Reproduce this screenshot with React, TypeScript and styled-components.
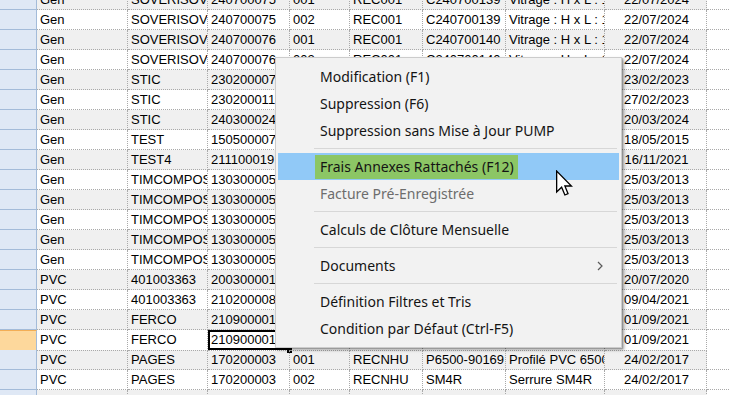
import styled, { createGlobalStyle } from 'styled-components';

const GlobalStyle = createGlobalStyle`
  html, body {
    margin: 0;
    padding: 0;
    background: #ffffff;
    overflow: hidden;
  }
`;

type Line = {
  kind: string;
  supplier: string;
  number: string;
  line: string;
  rec: string;
  code: string;
  label: string;
  date: string;
};

const mk = (
  kind: string,
  supplier: string,
  number: string,
  line: string,
  rec: string,
  code: string,
  label: string,
  date: string
): Line => ({ kind, supplier, number, line, rec, code, label, date });

const VIT = 'Vitrage : H x L : 1200 x 800';

const Lines: Line[] = [
  mk('Gen', 'SOVERISOV', '240700075', '001', 'REC001', 'C240700139', VIT, '22/07/2024'),
  mk('Gen', 'SOVERISOV', '240700075', '002', 'REC001', 'C240700139', VIT, '22/07/2024'),
  mk('Gen', 'SOVERISOV', '240700076', '001', 'REC001', 'C240700140', VIT, '22/07/2024'),
  mk('Gen', 'SOVERISOV', '240700076', '002', 'REC001', 'C240700140', VIT, '22/07/2024'),
  mk('Gen', 'STIC', '230200007', '001', 'REC001', 'STIC-0007', 'Joint STIC', '23/02/2023'),
  mk('Gen', 'STIC', '230200011', '001', 'REC001', 'STIC-0011', 'Joint STIC', '27/02/2023'),
  mk('Gen', 'STIC', '240300024', '001', 'REC001', 'STIC-0024', 'Joint STIC', '20/03/2024'),
  mk('Gen', 'TEST', '150500007', '001', 'REC001', 'TEST-01', 'Article test', '18/05/2015'),
  mk('Gen', 'TEST4', '211100019', '001', 'REC001', 'TEST-04', 'Article test', '16/11/2021'),
  mk('Gen', 'TIMCOMPOS', '130300005', '001', 'REC001', 'TIM-001', 'Composite', '25/03/2013'),
  mk('Gen', 'TIMCOMPOS', '130300005', '002', 'REC001', 'TIM-002', 'Composite', '25/03/2013'),
  mk('Gen', 'TIMCOMPOS', '130300005', '003', 'REC001', 'TIM-003', 'Composite', '25/03/2013'),
  mk('Gen', 'TIMCOMPOS', '130300005', '004', 'REC001', 'TIM-004', 'Composite', '25/03/2013'),
  mk('Gen', 'TIMCOMPOS', '130300005', '005', 'REC001', 'TIM-005', 'Composite', '25/03/2013'),
  mk('PVC', '401003363', '200300001', '001', 'RECNHU', 'P401-001', 'Profilé PVC', '20/07/2020'),
  mk('PVC', '401003363', '210200008', '001', 'RECNHU', 'P401-008', 'Profilé PVC', '09/04/2021'),
  mk('PVC', 'FERCO', '210900001', '001', 'RECNHU', 'FERCO-01', 'Ferrure', '01/09/2021'),
  mk('PVC', 'FERCO', '210900001', '002', 'RECNHU', 'FERCO-02', 'Ferrure', '01/09/2021'),
  mk('PVC', 'PAGES', '170200003', '001', 'RECNHU', 'P6500-90169', 'Profilé PVC 6500 Blanc', '24/02/2017'),
  mk('PVC', 'PAGES', '170200003', '002', 'RECNHU', 'SM4R', 'Serrure SM4R', '24/02/2017'),
  mk('PVC', 'PAGES', '170200003', '003', 'RECNHU', 'P6500-90170', 'Profilé PVC 6500 Blanc', '24/02/2017'),
];

const CURRENT_ROW = 17;

type Entry =
  | { type: 'item'; label: string; active?: boolean; disabled?: boolean; sub?: boolean }
  | { type: 'sep' };

const MenuEntries: Entry[] = [
  { type: 'item', label: 'Modification (F1)' },
  { type: 'item', label: 'Suppression (F6)' },
  { type: 'item', label: 'Suppression sans Mise à Jour PUMP' },
  { type: 'sep' },
  { type: 'item', label: 'Frais Annexes Rattachés (F12)', active: true },
  { type: 'item', label: 'Facture Pré-Enregistrée', disabled: true },
  { type: 'sep' },
  { type: 'item', label: 'Calculs de Clôture Mensuelle' },
  { type: 'sep' },
  { type: 'item', label: 'Documents', sub: true },
  { type: 'sep' },
  { type: 'item', label: 'Définition Filtres et Tris' },
  { type: 'item', label: 'Condition par Défaut (Ctrl-F5)' },
];

const App = () => {
  return (
    <>
      <GlobalStyle />
      <Screen>
        <Sheet>
          {Lines.map((l, i) => {
            const current = i === CURRENT_ROW;
            return (
              <Row key={i} $alt={i % 2 === 0}>
                <RowHeader $current={current} />
                <Cell>{l.kind}</Cell>
                <Cell>{l.supplier}</Cell>
                <Cell $focused={current}>{l.number}</Cell>
                <Cell>{l.line}</Cell>
                <Cell>{l.rec}</Cell>
                <Cell>{l.code}</Cell>
                <Cell>{l.label}</Cell>
                <Cell $center>{l.date}</Cell>
                <Filler />
              </Row>
            );
          })}
        </Sheet>

        <ContextMenu>
          {MenuEntries.map((e, i) =>
            e.type === 'sep' ? (
              <Separator key={i} />
            ) : (
              <MenuItem key={i} $active={!!e.active} $disabled={!!e.disabled}>
                <ItemLabel $marked={!!e.active}>{e.label}</ItemLabel>
                {e.sub && (
                  <SubArrow viewBox="0 0 6 10" width="6" height="10">
                    <path d="M1 1 L5 5 L1 9" fill="none" stroke="#5a5a5a" strokeWidth="1.2" />
                  </SubArrow>
                )}
              </MenuItem>
            )
          )}
        </ContextMenu>

        <Pointer viewBox="0 0 13 20" width="17" height="27">
          <path
            d="M0.5 0.5 L0.5 16.5 L4.3 12.8 L6.8 18.8 L9.2 17.8 L6.8 11.9 L11.8 11.9 Z"
            fill="#ffffff"
            stroke="#000000"
            strokeWidth="1"
            strokeLinejoin="miter"
          />
        </Pointer>
      </Screen>
    </>
  );
};

export default App;

const Screen = styled.div`
  position: relative;
  width: 729px;
  height: 395px;
  overflow: hidden;
  background: #ffffff;
`;

const Sheet = styled.div`
  display: flex;
  flex-direction: column;
  margin-top: -10px;
  font-family: 'Liberation Sans', Arial, sans-serif;
  font-size: 13px;
  color: #000000;
`;

const Row = styled.div<{ $alt: boolean }>`
  display: grid;
  grid-template-columns: 37px 91px 80px 82px 60px 73px 83px 99px 102px 1fr;
  height: 20px;
  background: ${({ $alt }) => ($alt ? '#f0f0f0' : '#ffffff')};
`;

const RowHeader = styled.div<{ $current: boolean }>`
  box-sizing: border-box;
  background: ${({ $current }) => ($current ? '#fdd89c' : '#dfe8f5')};
  border-right: 1px solid #a3bbd9;
  border-bottom: 1px solid #a3bbd9;
  border-top: ${({ $current }) => ($current ? '1px solid #f3ae55' : '0')};
`;

const Cell = styled.div<{ $center?: boolean; $focused?: boolean }>`
  position: relative;
  box-sizing: border-box;
  padding: 0 1px 0 3px;
  line-height: 20px;
  white-space: nowrap;
  overflow: ${({ $focused }) => ($focused ? 'visible' : 'hidden')};
  text-align: ${({ $center }) => ($center ? 'center' : 'left')};
  border-right: 1px dotted #a9a9a9;
  border-bottom: 1px dotted #a9a9a9;
  ${({ $focused }) =>
    $focused &&
    `
    background: #ffffff;
    box-shadow: inset 0 0 0 2px #000000;
    &::after {
      content: '';
      position: absolute;
      right: -3px;
      bottom: -3px;
      width: 5px;
      height: 5px;
      background: #000000;
    }
  `}
`;

const Filler = styled.div`
  box-sizing: border-box;
  background: #ffffff;
  border-bottom: 1px dotted #a9a9a9;
`;

const ContextMenu = styled.div`
  position: absolute;
  left: 275px;
  top: 57px;
  width: 347px;
  box-sizing: border-box;
  padding: 5px 2px 5px 2px;
  background: #f2f2f2;
  border: 1px solid #cccccc;
  box-shadow: 2px 2px 3px rgba(0, 0, 0, 0.35), 1px 1px 1px rgba(0, 0, 0, 0.15);
  font-family: 'Noto Sans', 'Open Sans', sans-serif;
  font-size: 14px;
  z-index: 2;
`;

const MenuItem = styled.div<{ $active: boolean; $disabled: boolean }>`
  display: flex;
  align-items: center;
  height: 27px;
  padding: 0 16px 0 42px;
  background: ${({ $active }) => ($active ? '#91c9f7' : 'transparent')};
  color: ${({ $disabled }) => ($disabled ? '#6d6d6d' : '#141414')};
`;

const ItemLabel = styled.span<{ $marked: boolean }>`
  flex: 1;
  white-space: nowrap;
  ${({ $marked }) =>
    $marked &&
    `
    flex: none;
    margin-left: -5px;
    padding: 0 4px 0 5px;
    line-height: 24px;
    background: #8cc665;
  `}
`;

const SubArrow = styled.svg`
  margin-left: auto;
  display: block;
`;

const Separator = styled.div`
  height: 1px;
  margin: 4px 2px 4px 36px;
  background: #d7d7d7;
`;

const Pointer = styled.svg`
  position: absolute;
  left: 556px;
  top: 170px;
  z-index: 3;
`;
